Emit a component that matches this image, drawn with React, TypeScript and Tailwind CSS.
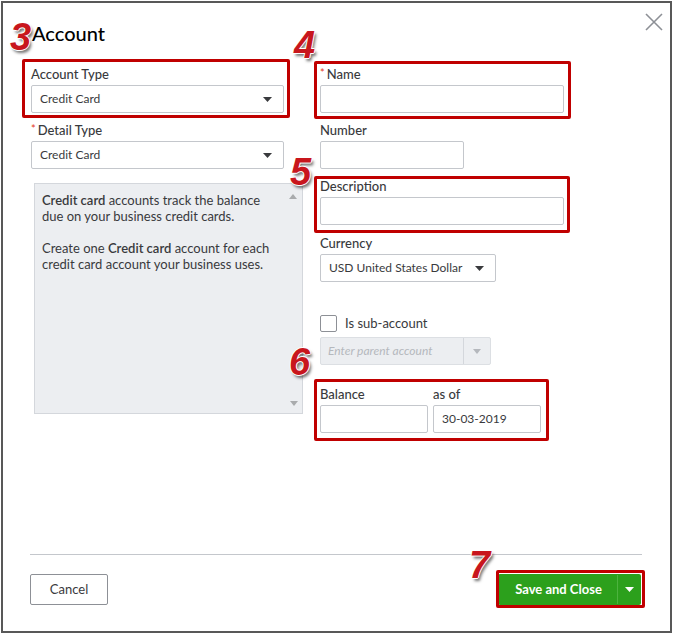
import React from "react";

const font = { fontFamily: "Lato, 'Open Sans', sans-serif" };

function Caret({ className = "" }: { className?: string }) {
  return (
    <svg width="9" height="5" viewBox="0 0 9 5" className={className}>
      <path d="M0 0 L9 0 L4.5 5 Z" fill="#393a3d" />
    </svg>
  );
}

function Label({ children, req = false }: { children: React.ReactNode; req?: boolean }) {
  return (
    <div className="h-[19px] flex items-start text-[13px] leading-[16px] font-medium text-[#393a3d]">
      {req && <span className="text-[#e5412d] text-[11px] mr-[2px] mt-[-1px]">*</span>}
      {children}
    </div>
  );
}

function Select({ value, w }: { value: string; w: string }) {
  return (
    <div className={`${w} h-[28px] border border-[#c4c7cc] rounded-[2px] bg-white flex items-center justify-between pl-[8px] pr-[11px] text-[12px] text-[#393a3d]`}>
      <span>{value}</span>
      <Caret />
    </div>
  );
}

function Input({ w, value }: { w: string; value?: string }) {
  return (
    <div className={`${w} h-[28px] border border-[#c4c7cc] rounded-[2px] bg-white flex items-center pl-[8px] text-[12px] text-[#393a3d]`}>
      {value}
    </div>
  );
}

function Num({ n, x, y }: { n: string; x: string; y: string }) {
  return (
    <div
      className={`absolute ${x} ${y} text-[38px] leading-[38px] font-black italic text-[#c8161d] [text-shadow:1px_0_0_#fff,-1px_0_0_#fff,0_1px_0_#fff,0_-1px_0_#fff,2px_3px_3px_rgba(0,0,0,0.55)]`}
      style={{ fontFamily: "'Liberation Sans', Arial, sans-serif" }}
    >
      {n}
    </div>
  );
}

function RedBox({ cls }: { cls: string }) {
  return <div className={`absolute ${cls} border-[3px] border-[#c00000] rounded-[2px] pointer-events-none`} />;
}

export default function App() {
  return (
    <div className="w-[674px] h-[634px] bg-white relative overflow-hidden" style={font}>
      <div className="absolute left-[1px] top-[1px] w-[671px] h-[632px] border-2 border-[#585858] bg-white">
        <div className="relative w-full h-full">
          {/* close */}
          <svg className="absolute left-[642px] top-[10px]" width="18" height="18" viewBox="0 0 18 18">
            <path d="M1 1 L17 17 M17 1 L1 17" stroke="#8d9096" strokeWidth="1.6" />
          </svg>

          <div className="pl-[28px] pt-[18px]">
            <div className="text-[20px] leading-[24px] font-medium text-[#000] ml-[1px]">Account</div>

            <div className="flex mt-[21px]">
              {/* left column */}
              <div className="w-[289px] flex flex-col">
                <Label>Account Type</Label>
                <Select value="Credit Card" w="w-[253px]" />
                <div className="h-[9px]" />
                <Label req>Detail Type</Label>
                <Select value="Credit Card" w="w-[253px]" />
                <div className="ml-[3px] mt-[14px] w-[269px] h-[231px] bg-[#eceef1] border border-[#d4d7dc] relative pl-[7px] pr-[24px] pt-[8px] text-[13px] leading-[16px] text-[#393a3d]">
                  <p>
                    <span className="font-semibold">Credit card</span> accounts track the balance due on your business credit cards.
                  </p>
                  <p className="mt-[16px]">
                    Create one <span className="font-semibold">Credit card</span> account for each credit card account your business uses.
                  </p>
                  <svg className="absolute right-[5px] top-[10px]" width="8" height="5" viewBox="0 0 8 5">
                    <path d="M0 5 L8 5 L4 0 Z" fill="#a9abad" />
                  </svg>
                  <svg className="absolute right-[4px] bottom-[7px]" width="8" height="5" viewBox="0 0 8 5">
                    <path d="M0 0 L8 0 L4 5 Z" fill="#a9abad" />
                  </svg>
                </div>
              </div>

              {/* right column */}
              <div className="flex flex-col">
                <Label req>Name</Label>
                <Input w="w-[244px]" />
                <div className="h-[9px]" />
                <Label>Number</Label>
                <Input w="w-[144px]" />
                <div className="h-[9px]" />
                <Label>Description</Label>
                <Input w="w-[244px]" />
                <div className="h-[10px]" />
                <Label>Currency</Label>
                <Select value="USD United States Dollar" w="w-[176px]" />
                <div className="flex items-center mt-[33px] h-[17px]">
                  <div className="w-[17px] h-[17px] border border-[#8d9096] rounded-[2px] bg-white" />
                  <span className="ml-[8px] text-[13px] text-[#393a3d]">Is sub-account</span>
                </div>
                <div className="mt-[5px] w-[171px] h-[28px] border border-[#dcdfe3] bg-[#eceef1] rounded-[2px] flex">
                  <div className="flex-1 flex items-center pl-[7px] text-[12px] italic text-[#b5b8bd] border-r border-[#d4d7dc]">
                    Enter parent account
                  </div>
                  <div className="w-[26px] flex items-center justify-center">
                    <svg width="8" height="5" viewBox="0 0 8 5">
                      <path d="M0 0 L8 0 L4 5 Z" fill="#b5b8bd" />
                    </svg>
                  </div>
                </div>
                <div className="flex gap-[5px] mt-[21px]">
                  <div className="flex flex-col">
                    <Label>Balance</Label>
                    <Input w="w-[108px]" />
                  </div>
                  <div className="flex flex-col">
                    <Label>as of</Label>
                    <Input w="w-[108px]" value="30-03-2019" />
                  </div>
                </div>
              </div>
            </div>
          </div>

          {/* footer */}
          <div className="absolute left-[27px] right-[28px] bottom-[26px]">
            <div className="h-px bg-[#c4c7cc]" />
            <div className="flex justify-between items-center mt-[19px]">
              <div className="w-[78px] h-[31px] border border-[#8d9096] rounded-[2px] flex items-center justify-center text-[13px] text-[#393a3d]">
                Cancel
              </div>
              <div className="w-[143px] h-[31px] bg-[#2ca01c] rounded-[2px] flex items-stretch mr-[1px]">
                <div className="flex-1 flex items-center justify-center text-[13px] font-bold text-white pl-[2px]">
                  Save and Close
                </div>
                <div className="w-px bg-[#4db33f] my-[1px]" />
                <div className="w-[23px] flex items-center justify-center">
                  <svg width="9" height="5" viewBox="0 0 9 5">
                    <path d="M0 0 L9 0 L4.5 5 Z" fill="#fff" />
                  </svg>
                </div>
              </div>
            </div>
          </div>

          {/* annotations */}
          <RedBox cls="left-[19px] top-[56px] w-[268px] h-[59px]" />
          <RedBox cls="left-[311px] top-[58px] w-[257px] h-[58px]" />
          <RedBox cls="left-[311px] top-[173px] w-[256px] h-[57px]" />
          <RedBox cls="left-[311px] top-[376px] w-[235px] h-[62px]" />
          <RedBox cls="left-[493px] top-[567px] w-[149px] h-[38px]" />
          <Num n="3" x="left-[7px]" y="top-[15px]" />
          <Num n="4" x="left-[291px]" y="top-[23px]" />
          <Num n="5" x="left-[287px]" y="top-[150px]" />
          <Num n="6" x="left-[286px]" y="top-[340px]" />
          <Num n="7" x="left-[466px]" y="top-[543px]" />
        </div>
      </div>
    </div>
  );
}
